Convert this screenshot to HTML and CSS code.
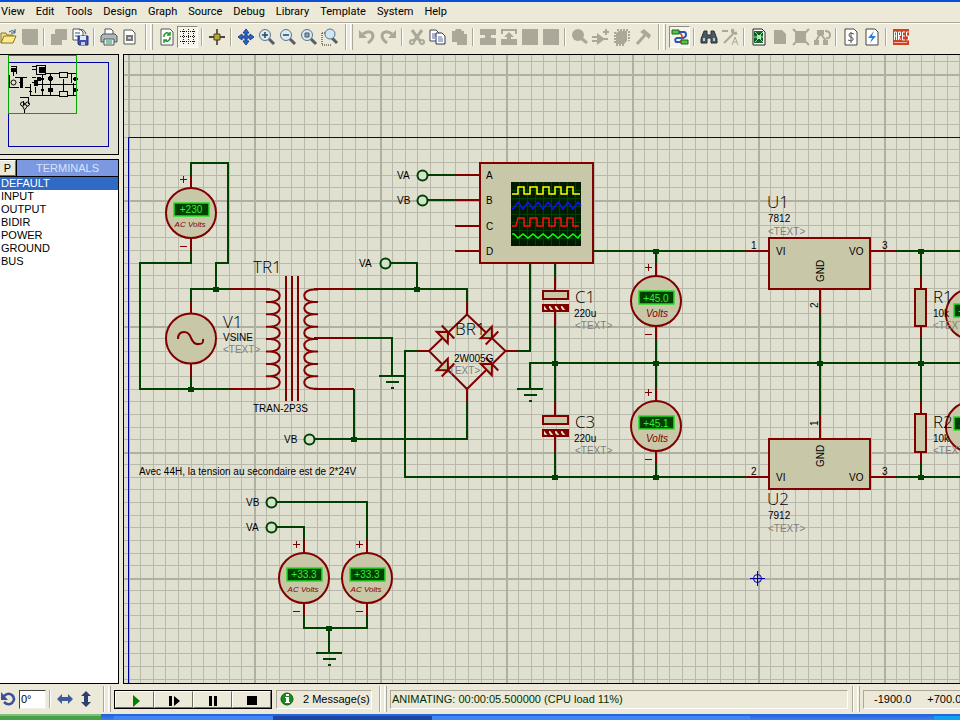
FILE: index.html
```html
<!DOCTYPE html>
<html lang="en">
<head>
<meta charset="utf-8">
<title>Schematic capture</title>
<link rel="stylesheet" href="styles.css">
</head>
<body>
<div class="title-edge"></div>
<nav class="menu" aria-label="Main menu">
  <button>View</button><button>Edit</button><button>Tools</button><button>Design</button><button>Graph</button><button>Source</button><button>Debug</button><button>Library</button><button>Template</button><button>System</button><button>Help</button>
</nav>

<div class="toolbar" role="toolbar" aria-label="Tools">
  <button aria-label="Open"><svg viewBox="0 0 18 18"><path d="M1 15V5h5l1 2h6v2" fill="#f5df85" stroke="#8a7420"/><path d="M1 15l3-7h12l-3 7z" fill="#ffe98c" stroke="#8a7420"/><path d="M9 4q3-3 6 0m0-3v4h-4" fill="none" stroke="#2c5a7c"/></svg></button>
  <button aria-label="Save" disabled><svg viewBox="0 0 18 18"><path class="off" d="M1 1h16v16H3l-2-2z"/></svg></button>
  <i class="sep"></i>
  <button aria-label="Import section" disabled><svg viewBox="0 0 18 18"><path class="off" d="M1 6h4V2l1-1h11v11h-5v5H1z"/></svg></button>
  <button aria-label="Export section"><svg viewBox="0 0 18 18"><path d="M2 1h7l3 3v8H2z" fill="#fff" stroke="#555"/><path d="M4 5h5M4 8h4M8 2q5-2 7 4" stroke="#24518c" fill="none"/><path d="M7 8h10v9H8l-1-1z" fill="#3f51b0" stroke="#29327a"/><path d="M9 8h6v4H9z" fill="#dfe6ff"/><path d="M10 14h4v3h-4z" fill="#ccd"/></svg></button>
  <i class="sep"></i>
  <button aria-label="Print"><svg viewBox="0 0 18 18"><path d="M5 7V1h6l2 2v4" fill="#fff" stroke="#555"/><path d="M1 8l2-2h12l2 2v6H1z" fill="#aeb9bd" stroke="#4c575c"/><path d="M4 11h10v6H4z" fill="#e8eff0" stroke="#4c575c"/><path d="M6 13h6M6 15h6" stroke="#2f9a56"/></svg></button>
  <button aria-label="Print area"><svg viewBox="0 0 18 18"><path d="M3 2h8l3 3v11H3z" fill="#fff" stroke="#555"/><path d="M5 7h7v6H5z" fill="#777"/><path d="M7 9h3v2H7z" fill="#c8d0d8"/></svg></button>
  <i class="grip"></i>
  <button aria-label="Redraw"><svg viewBox="0 0 18 18"><path d="M3 1h9l3 3v13H3z" fill="#fff" stroke="#555"/><path d="M6 9V7q3-4 5-1m1-2v3H9M12 9v2q-3 4-5 1m-1 3v-3h3" fill="none" stroke="#1d9a2b" stroke-width="1.5"/></svg></button>
  <button aria-label="Grid" class="pressed"><svg viewBox="0 0 18 18"><path d="M1 3.500h16M1 8.500h16M1 13.500h16" stroke="#111" stroke-dasharray="1 1"/><path d="M4.500 1v16M9.500 1v16M14.500 1v16" stroke="#222" stroke-dasharray="1 1"/></svg></button>
  <i class="sep"></i>
  <button aria-label="Origin"><svg viewBox="0 0 18 18"><path d="M9 1v16M1 9h16" stroke="#111" stroke-width="1.3"/><path d="M6 6h6v6H6z" fill="#b5a838" stroke="#4d4510"/></svg></button>
  <i class="sep"></i>
  <button aria-label="Pan"><svg viewBox="0 0 18 18"><path d="M9 1l3 4h-2v3h3V6l4 3-4 3v-2h-3v3h2l-3 4-3-4h2v-3H5v2L1 9l4-3v2h3V5H6z" fill="#2c64c8" stroke="#15428f"/></svg></button>
  <button aria-label="Zoom in"><svg viewBox="0 0 18 18"><path d="M10 10l6 6" stroke="#555f66" stroke-width="3"/><circle cx="7" cy="7" r="5.500" fill="#dceaf2" stroke="#5a7488"/><path d="M4 7h6M7 4v6" stroke="#27465c" stroke-width="1.5"/></svg></button>
  <button aria-label="Zoom out"><svg viewBox="0 0 18 18"><path d="M10 10l6 6" stroke="#555f66" stroke-width="3"/><circle cx="7" cy="7" r="5.500" fill="#dceaf2" stroke="#5a7488"/><path d="M4 7h6" stroke="#27465c" stroke-width="1.5"/></svg></button>
  <button aria-label="Zoom all"><svg viewBox="0 0 18 18"><path d="M10 10l6 6" stroke="#555f66" stroke-width="3"/><circle cx="7" cy="7" r="5.500" fill="#dceaf2" stroke="#5a7488"/><path d="M5 5h4v4H5z" fill="#8ba3b3" stroke="#405c70"/></svg></button>
  <button aria-label="Zoom area"><svg viewBox="0 0 18 18"><path d="M1 5v12h9M1 5h4" fill="none" stroke="#222" stroke-dasharray="1 1"/><path d="M11 10l5 5" stroke="#555f66" stroke-width="3"/><circle cx="9" cy="6" r="5" fill="#cfe6f7" stroke="#5a7488"/></svg></button>
  <i class="grip"></i>
  <button aria-label="Undo" disabled><svg viewBox="0 0 18 18"><path d="M5 6q5-4 9-1 3 5-4 10" class="offline" stroke-width="3"/><path class="off" d="M1 2v8h8z"/></svg></button>
  <button aria-label="Redo" disabled><svg viewBox="0 0 18 18"><path d="M13 6Q8 2 4 5q-3 5 4 10" class="offline" stroke-width="3"/><path class="off" d="M17 2v8H9z"/></svg></button>
  <i class="sep"></i>
  <button aria-label="Cut" disabled><svg viewBox="0 0 18 18"><path d="M4 2l8 11M14 2L6 13" class="offline" stroke-width="3"/><circle class="offline" cx="4" cy="14" r="2" stroke-width="2"/><circle class="offline" cx="14" cy="14" r="2" stroke-width="2"/></svg></button>
  <button aria-label="Copy"><svg viewBox="0 0 18 18"><path d="M1 2h6l3 3v8H1z" fill="#fff" stroke="#445"/><path d="M3 6h4M3 8h4M3 10h3" stroke="#4a6ea9"/><path d="M7 5h6l3 3v8H7z" fill="#fff" stroke="#335"/><path d="M9 9h4M9 11h5M9 13h5" stroke="#4a6ea9"/></svg></button>
  <button aria-label="Paste" disabled><svg viewBox="0 0 18 18"><path class="off" d="M2 3h3l1-2h5l1 2h2v3h3v11H7v-3H2z"/></svg></button>
  <i class="sep"></i>
  <button aria-label="Block copy" disabled><svg viewBox="0 0 18 18"><path class="off" d="M1 1h16v6h-5v3h5v7H1v-7h5V7H1z"/></svg></button>
  <button aria-label="Block move" disabled><svg viewBox="0 0 18 18"><path d="M2 6V2h14v4" class="offline" stroke-width="2"/><path class="off" d="M9 4l5 5h-3v2h6v6H1v-6h6V9H4z"/></svg></button>
  <button aria-label="Block rotate" disabled><svg viewBox="0 0 18 18"><path class="off" d="M1 1h16v16H1z"/></svg></button>
  <button aria-label="Block delete" disabled><svg viewBox="0 0 18 18"><path class="off" d="M1 1h16v16H1z"/></svg></button>
  <i class="sep"></i>
  <button aria-label="Pick parts" disabled><svg viewBox="0 0 18 18"><circle class="off" cx="7" cy="7" r="6"/><path class="offline" stroke-width="3" d="M10 10l6 5"/></svg></button>
  <button aria-label="Make device" disabled><svg viewBox="0 0 18 18"><path class="off" d="M5 5l8 6-8 6z"/><path class="offline" stroke-width="2" d="M0 9h5M0 13h5M12 11h4M11 4h6M14 1v6"/></svg></button>
  <button aria-label="Packaging tool" disabled><svg viewBox="0 0 18 18"><path class="off" d="M3 5l3-2h8v10l-3 3H3z"/><path class="offline" stroke-dasharray="2 1" stroke-width="2" d="M4 2h12M2 4v12M16 3v10M3 17h9"/></svg></button>
  <button aria-label="Decompose" disabled><svg viewBox="0 0 18 18"><path class="offline" stroke-width="3" d="M3 16l8-9"/><path class="off" d="M6 4l4-3 7 6-2 4-3-3z"/></svg></button>
  <i class="grip"></i>
  <button aria-label="Wire autorouter" class="pressed"><svg viewBox="0 0 18 18"><path d="M8 4h5q2 0 2 3 0 2-3 3H6q-3 1-1 4h5" fill="none" stroke="#2455b8" stroke-width="2"/><path d="M7 5q4 0 4 4t-2 5h3" fill="none" stroke="#d23a22" stroke-width="1.500"/><path d="M1 2h7v4H1zM10 12h7v4h-7z" fill="#53c544" stroke="#17651a"/></svg></button>
  <i class="sep"></i>
  <button aria-label="Search and tag"><svg viewBox="0 0 18 18"><path d="M4 3h3v4h4V3h3l3 8v4h-6v-5H7v5H1v-4z" fill="#4b5960" stroke="#26333a"/><path d="M3 10h2v3H3zM13 10h2v3h-2z" fill="#b9cad3"/></svg></button>
  <button aria-label="Property assignment" disabled><svg viewBox="0 0 18 18"><path class="offline" stroke-width="2" d="M3 15l9-9M1 3h6"/><path class="offline" stroke-width="3" d="M12 1q-2 5 4 4"/><path class="offline" d="M11 17l3-8 3 8M12 14h4"/></svg></button>
  <i class="sep"></i>
  <button aria-label="Design explorer"><svg viewBox="0 0 18 18"><path d="M3 1h9l3 3v13H3z" fill="#fff" stroke="#222"/><path d="M4 3h9v12H4z" fill="#1b6a2f"/><path d="M4 6h9M4 12h9" stroke="#0c3b18"/><path d="M5 4l3 3M13 4l-3 3M5 14l3-3M13 14l-3-3M4 9h9" stroke="#8fe09a"/><path d="M7 7h4v4H7z" fill="#a6f0ae"/></svg></button>
  <button aria-label="New sheet" disabled><svg viewBox="0 0 18 18"><path class="off" d="M3 2h8l4 4v10H3z"/></svg></button>
  <button aria-label="Remove sheet" disabled><svg viewBox="0 0 18 18"><path class="off" d="M3 3h11v12H3z"/><path class="offline" stroke-width="2" d="M1 1l16 16M17 1L1 17"/></svg></button>
  <button aria-label="Exit to parent" disabled><svg viewBox="0 0 18 18"><path class="off" d="M4 2h7v5H4zM1 12h5v5H1zM10 12h5v5h-5z"/><path class="offline" stroke-width="2" d="M7 6l-4 7M8 6l5 7M12 3q5 0 5 4t-4 3"/></svg></button>
  <i class="sep"></i>
  <button aria-label="Bill of materials"><svg viewBox="0 0 18 18"><path d="M3 1h9l3 3v13H3z" fill="#fff" stroke="#444"/><path d="M12 6q-5-2-5 1 0 2 2 2 3 1 2 3-1 2-5 0M9 4v11" fill="none" stroke="#555"/></svg></button>
  <button aria-label="Electrical rule check"><svg viewBox="0 0 18 18"><path d="M3 1h9l3 3v13H3z" fill="#fff" stroke="#444"/><path d="M11 3L5 10h4l-2 5 6-7H9z" fill="#2b7be0"/></svg></button>
  <i class="sep"></i>
  <button aria-label="Netlist to ARES"><svg viewBox="0 0 18 18"><path d="M1 1h16v16H1z" fill="#d1401f"/><path d="M2.500 12V4h2v8M3 8h2M6.500 12V4h2v3.500h-2l2 4.500M13 4h-2.500v8H13M11 8h2M16.500 4h-2v4h2v4h-2" fill="none" stroke="#fff"/><path d="M2 14.500h13" stroke="#f2b7a4"/></svg></button>
</div>

<main class="work">
  <aside class="side">
    <div class="overview">
      <svg class="fill" aria-label="Overview">
        <g transform="translate(0,-55)" fill="none" shape-rendering="crispEdges">
          <rect x="8.500" y="62.500" width="100" height="84" stroke="#0000a0"/>
          <g stroke="#000">
            <path d="M13.500 68v8M16.500 66v8M11 66.500h5M9.500 75v12h9M15 77.500h12M19 82.500h2M21.500 78v10M25 87.500h6M32 77.500h4M32 82.500h4M35.500 87v6M29 91.500h3M32 66.500h4M32 69.500h4M42.500 74v22M50.500 73v22M46 73.500h13M68 73.500h9M36 84.500h41M30.500 84v11h29M68 95.500h9M63.500 79v12M71.500 74v9M73.500 83v12M20 97.500h8v6M23 100.500v4M24.500 110v4M22 113.500h5"/>
            <rect x="36.500" y="65.500" width="9" height="9"/><rect x="59.500" y="72.500" width="8" height="5"/><rect x="59.500" y="91.500" width="8" height="5"/>
            <path d="M21.500 77v11" stroke-width="3"/><path d="M35.500 80v6M39 77v4" stroke-width="4"/>
          </g>
          <g fill="#000"><rect x="39" y="67" width="6" height="6"/><circle cx="13.500" cy="70" r="2.500"/><circle cx="50.500" cy="78.500" r="2.500"/><circle cx="50.500" cy="90" r="2.500"/><circle cx="42.500" cy="79" r="1.800"/><circle cx="42.500" cy="90" r="1.800"/><circle cx="75.500" cy="79" r="2.300"/><circle cx="75.500" cy="90" r="2.300"/></g>
          <g stroke="#000" shape-rendering="auto"><circle cx="13.500" cy="82.500" r="2.500"/><circle cx="22.500" cy="104" r="2"/><circle cx="27.500" cy="104" r="2"/><path d="M22.500 106l2 4 3-4"/></g>
          <rect x="8.500" y="55.500" width="68" height="58" stroke="#00a800"/>
        </g>
      </svg>
    </div>
    <section class="picker">
      <header><button class="pick">P</button><h2>TERMINALS</h2></header>
      <ul>
        <li><button class="current">DEFAULT</button></li><li><button>INPUT</button></li><li><button>OUTPUT</button></li><li><button>BIDIR</button></li><li><button>POWER</button></li><li><button>GROUND</button></li><li><button>BUS</button></li>
      </ul>
    </section>
  </aside>

  <div class="sheet">
    <svg class="fill" aria-label="Schematic">
      <defs>
        <pattern id="grid" x="128" y="74" width="126" height="126" patternUnits="userSpaceOnUse">
          <path class="minor" d="M12.500 0v126M25.500 0v126M37.500 0v126M50.500 0v126M63.500 0v126M75.500 0v126M88.500 0v126M101.500 0v126M113.500 0v126M0 12.500h126M0 25.500h126M0 37.500h126M0 50.500h126M0 63.500h126M0 75.500h126M0 88.500h126M0 101.500h126M0 113.500h126"/>
          <path class="major" d="M0 1h126M1 0v126"/>
        </pattern>
        <pattern id="hatch" width="6" height="8" patternUnits="userSpaceOnUse"><path d="M0 0h6v8H0z" fill="#800000"/><path d="M0 0l6 8" stroke="#e8dcc0" stroke-width="2"/></pattern>
        <g id="meter">
          <path class="pin" d="M0-38v13M0 25v13"/>
          <path class="thin" d="M-7.500-37v7M-11-33.500h7M-11 33.500h7"/>
          <circle class="body" r="25"/>
          <rect x="-17" y="-10" width="35" height="13" fill="#004000" stroke="#20e020" stroke-width="1.500"/>
        </g>
        <g id="diode"><path class="body" d="M0 0l-8-8v16z" stroke-width="1.500"/><path class="pin" d="M0-9v18"/></g>
        <g id="ground"><path class="wire" d="M-13 0h26M-6 6h13M-1 12h3"/></g>
        <g id="cap"><rect class="body" x="-12" y="1" width="25" height="8"/><rect x="-12" y="15" width="25" height="6" fill="url(#hatch)" class="edge"/></g>
      </defs>
      <g transform="translate(-124,-55)">
        <rect x="100" y="50" width="3000" height="2000" fill="url(#grid)"/>
        <path class="border" d="M128.500 2000V137.500H3000"/>

        <g class="wire">
          <path d="M191 176V163H228V263H216V289M191 251V263H140V389H229M191 301V289H229M191 376V389"/>
          <path d="M354 289H467V302M354 338H392V376M354 389V439M315 439H467V401M391 263H417V289"/>
          <path d="M428 175H455M428 200H455M593 251H745M530 263V351H517M417 351H405V477H745M555 263V277M555 326V402M555 451V477"/>
          <path d="M530 388V363H3000M656 251V264M656 339V389M656 464V477M820 314V416M895 251H3000M895 477H3000M921 251V277M921 338V402M921 464V477"/>
          <path d="M277 502H367V541M277 527H304V541M304 616V628H367V616M329 628V653"/>
        </g>
        <g class="pin">
          <path d="M191 301V314M191 363V377M229 289H270M229 389H270M314 289H354M314 338H354M314 389H354"/>
          <path d="M286 276V401M292 276V401M298 276V401"/>
          <path d="M455 175H480M455 200H480M455 226H480M455 251H480M467 301V315M467 388V401M417 351H429M505 351H517"/>
          <path d="M555 277V290M555 312V326M555 402V415M555 437V451M745 251H769M870 251H895M745 477H769M870 477H895M820 289V314M820 415V438"/>
          <path d="M921 276V289M921 326V338M921 401V414M921 452V464"/>
        </g>
        <g class="coil">
          <path d="M266 289.500h4c13 0 13 12.400 0 12.400h-4h4c13 0 13 12.400 0 12.400h-4h4c13 0 13 12.400 0 12.400h-4h4c13 0 13 12.400 0 12.400h-4h4c13 0 13 12.400 0 12.400h-4h4c13 0 13 12.400 0 12.400h-4h4c13 0 13 12.400 0 12.400h-4h4c13 0 13 12.400 0 12.400h-4"/>
          <path d="M318 289.500h-4c-13 0-13 12.400 0 12.400h4h-4c-13 0-13 12.400 0 12.400h4h-4c-13 0-13 12.400 0 12.400h4h-4c-13 0-13 12.400 0 12.400h4h-4c-13 0-13 12.400 0 12.400h4h-4c-13 0-13 12.400 0 12.400h4h-4c-13 0-13 12.400 0 12.400h4h-4c-13 0-13 12.400 0 12.400h4"/>
          <path d="M467 314.500L505.500 351 467 389 429 351z"/>
        </g>

        <g class="dot"><path d="M213 287h6v5h-6zM188 387h6v5h-6zM414 287h6v5h-6zM351 437h6v5h-6zM326 626h6v5h-6zM552 361h6v5h-6zM552 475h6v5h-6zM653 249h6v5h-6zM653 361h6v5h-6zM653 475h6v5h-6zM817 361h6v5h-6zM918 249h6v5h-6zM918 361h6v5h-6zM918 475h6v5h-6z"/></g>
        <g class="term"><circle cx="422.500" cy="175.500" r="5"/><circle cx="422.500" cy="200.500" r="5"/><circle cx="385.500" cy="263.500" r="5"/><circle cx="309.500" cy="439.500" r="5"/><circle cx="271.500" cy="502.500" r="5"/><circle cx="271.500" cy="527.500" r="5"/></g>
        <use href="#ground" x="392" y="376"/><use href="#ground" x="530" y="389"/><use href="#ground" x="329" y="653"/>

        <circle class="body" cx="191" cy="338.500" r="25"/>
        <path class="coil" d="M178 339q0-7 6-7 5 0 7 6 3 7 8 6 5 0 4-5"/>

        <g class="box"><rect x="480" y="163" width="113" height="100"/><rect x="769" y="238" width="101" height="51"/><rect x="769" y="439" width="101" height="50"/><rect x="915" y="289" width="11" height="37"/><rect x="915" y="414" width="11" height="38"/></g>
        <use href="#cap" x="555" y="290"/><use href="#cap" x="555" y="415"/>
        <use href="#meter" x="191" y="213"/><use href="#meter" x="656" y="301"/><use href="#meter" x="656" y="426"/><use href="#meter" x="304" y="578"/><use href="#meter" x="367" y="578"/><use href="#meter" x="971" y="314"/><use href="#meter" x="971" y="427"/>

        <rect x="511" y="182" width="70" height="64" fill="#001c00"/>
        <path d="M511 190.500h70M511 198.500h70M511 206.500h70M511 214.500h70M511 222.500h70M511 230.500h70M511 238.500h70M519.500 182v64M527.500 182v64M535.500 182v64M543.500 182v64M551.500 182v64M559.500 182v64M567.500 182v64M575.500 182v64" stroke="#004000" fill="none"/>
        <g fill="none" stroke-width="1.500">
          <path stroke="#ffff00" d="M512 194h6v-7h6v7h6v-7h7v7h6v-7h6v7h6v-7h6v7h6v-7h6v7h7"/>
          <path stroke="#1010ff" d="M512 209l2-1 4-6 5 7 5-7 5 7 5-7 5 7 5-7 5 7 5-7 5 7 5-7 5 7 5-7 3 4"/>
          <path stroke="#ff1010" d="M512 226h4l2-8h6v8h6v-8h7v8h6v-8h6v8h6v-8h6v8h6v-8h6v8h6"/>
          <path stroke="#10ff10" d="M512 234l2 0 4 4 5-4 5 4 5-4 5 4 5-4 5 4 5-4 5 4 5-4 5 4 5-4 5 4 3-4"/>
        </g>

        <g class="note">
          <text x="223" y="353">&lt;TEXT&gt;</text><text x="443" y="374">&lt;TEXT&gt;</text><text x="575" y="329">&lt;TEXT&gt;</text><text x="575" y="454">&lt;TEXT&gt;</text><text x="768" y="235">&lt;TEXT&gt;</text><text x="768" y="532">&lt;TEXT&gt;</text><text x="933" y="329">&lt;TEXT&gt;</text><text x="933" y="454">&lt;TEXT&gt;</text>
        </g>
        <use href="#diode" transform="translate(448,332) rotate(-44)"/><use href="#diode" transform="translate(492,338) rotate(44)"/><use href="#diode" transform="translate(448,370) rotate(44)"/><use href="#diode" transform="translate(492,364) rotate(-44)"/>
        <g class="label">
          <text x="486" y="179">A</text><text x="486" y="204">B</text><text x="486" y="230">C</text><text x="486" y="255">D</text>
          <text x="397" y="179">VA</text><text x="397" y="204">VB</text><text x="359" y="267">VA</text><text x="284" y="443">VB</text><text x="246" y="506">VB</text><text x="246" y="531">VA</text>
          <text x="223" y="341">VSINE</text><text x="253" y="412">TRAN-2P3S</text><text x="454" y="362">2W005G</text>
          <text x="574" y="317">220u</text><text x="574" y="442">220u</text><text x="768" y="222">7812</text><text x="768" y="519">7912</text><text x="933" y="317">10k</text><text x="933" y="442">10k</text>
          <text x="776" y="255">VI</text><text x="849" y="255">VO</text><text x="776" y="481">VI</text><text x="849" y="481">VO</text>
          <text x="751" y="249">1</text><text x="882" y="249">3</text><text x="751" y="475">2</text><text x="882" y="475">3</text>
          <text transform="translate(824,282) rotate(-90)">GND</text><text transform="translate(824,467) rotate(-90)">GND</text><text transform="translate(818,308) rotate(-90)">2</text><text transform="translate(818,426) rotate(-90)">1</text>
          <text x="139" y="475">Avec 44H, la tension au secondaire est de 2*24V</text>
        </g>
        <g class="ref">
          <text x="253" y="273">TR1</text><text x="223" y="328">V1</text><text x="455" y="335">BR1</text><text x="575" y="303">C1</text><text x="575" y="428">C3</text><text x="767" y="208">U1</text><text x="767" y="505">U2</text><text x="933" y="303">R1</text><text x="933" y="428">R2</text>
        </g>

        <g class="reading">
          <text x="191" y="213">+230</text><text x="656" y="302">+45.0</text><text x="656" y="427">+45.1</text><text x="304" y="578">+33.3</text><text x="367" y="578">+33.3</text><text x="971" y="315">+12.0</text><text x="971" y="428">-12.0</text>
        </g>
        <g class="unit"><text x="190" y="227">AC Volts</text><text x="303" y="592">AC Volts</text><text x="366" y="592">AC Volts</text><text class="dc" x="657" y="317">Volts</text><text class="dc" x="657" y="442">Volts</text></g>

        <g fill="none" stroke="#0000a0"><circle cx="757.500" cy="578.500" r="4"/><path d="M750 578.500h15M757.500 571v15"/></g>
      </g>
    </svg>
  </div>
</main>

<footer class="status">
  <div class="orient">
    <button aria-label="Rotate"><svg viewBox="0 0 18 18"><path d="M4 6q4-4 8-1 4 4 0 8-4 3-8-1" fill="none" stroke="#3c4f96" stroke-width="2.500"/><path d="M1 2v8h7z" fill="#3c4f96"/></svg></button>
    <input type="text" value="0°" aria-label="Rotation angle">
    <i class="sep"></i>
    <button aria-label="Mirror horizontally"><svg viewBox="0 0 18 18"><path d="M1 9l5-5v3h6V4l5 5-5 5v-3H6v3z" fill="#3c5a9c"/></svg></button>
    <button aria-label="Mirror vertically"><svg viewBox="0 0 18 18"><path d="M9 1l5 5h-3v6h3l-5 5-5-5h3V6H4z" fill="#2f3f70"/></svg></button>
  </div>
  <i class="grip"></i>
  <div class="transport">
    <button aria-label="Play"><svg viewBox="0 0 18 18"><path d="M7 3v12l7-6z" fill="#008000"/></svg></button>
    <button aria-label="Step"><svg viewBox="0 0 18 18"><path d="M4 4h3v10H4zM9 4v10l6-5z"/></svg></button>
    <button aria-label="Pause"><svg viewBox="0 0 18 18"><path d="M5 4h3v10H5zM10 4h3v10h-3z"/></svg></button>
    <button aria-label="Stop"><svg viewBox="0 0 18 18"><path d="M4 4h10v9H4z"/></svg></button>
  </div>
  <div class="field messages"><svg viewBox="0 0 14 14"><circle cx="7" cy="7" r="6" fill="#1c8a1c" stroke="#0d5d0d"/><path d="M6 2h3v2H6zM5 5h4v5h1v1H5v-1h1V6H5z" fill="#fff"/></svg><span>2 Message(s)</span></div>
  <i class="grip"></i>
  <div class="field progress">ANIMATING: 00:00:05.500000 (CPU load 11%)</div>
  <i class="grip"></i>
  <div class="field coords"><span>-1900.0</span><span>+700.0</span></div>
</footer>
<div class="taskbar"><i class="start"></i><i class="task"></i><i class="task active"></i><i class="task"></i><i class="task"></i><i class="room"></i><i class="tray"></i></div>
</body>
</html>
```
FILE: styles.css
```css
* { box-sizing: border-box; }
body {
  margin: 0;
  height: 100vh;
  display: flex;
  flex-direction: column;
  overflow: hidden;
  background: #ece9d8;
  color: #000;
  font: 11px/13px "Liberation Sans", Arial, sans-serif;
}
button { font: inherit; color: inherit; background: none; border: 0; padding: 0; white-space: nowrap; }
svg { display: block; }
.fill { width: 100%; height: 100%; }

.title-edge { flex: none; height: 2px; background: #0a4fd8; }
.menu {
  flex: none;
  display: flex;
  align-items: center;
  gap: 11px;
  height: 21px;
  padding: 0 1px 2px;
  border-bottom: 1px solid #aca899;
  font: 11px/13px Roboto, "Liberation Sans", sans-serif;
}
.toolbar {
  flex: none;
  display: flex;
  align-items: center;
  height: 31px;
  margin-left: -2px;
  padding-bottom: 4px;
  border-top: 1px solid #fff;
  overflow: hidden;
}
.toolbar button { flex: none; display: grid; place-items: center; width: 21px; height: 22px; }
.toolbar svg { width: 18px; height: 18px; }
.toolbar .pressed { background: #f6f4ec; border: 1px solid; border-color: #8c8a7e #fff #fff #8c8a7e; }
.off { fill: #aca899; }
.offline { fill: none; stroke: #aca899; }
.sep { flex: none; width: 8px; height: 18px; background: linear-gradient(90deg, #aca899 1px, #fff 1px, #fff 2px, transparent 2px) 3px 0 no-repeat; }
.grip {
  flex: none;
  width: 16px;
  height: 26px;
  background:
    linear-gradient(90deg, #aca899 1px, #fff 1px, #fff 2px, transparent 2px) 5px 0 no-repeat,
    linear-gradient(90deg, #fff 1px, #f4f2e8 1px, #f4f2e8 2px, #aca899 2px, #aca899 3px, transparent 3px) 10px 0 no-repeat;
}

.work { flex: 1; min-height: 0; display: flex; gap: 4px; }
.side { flex: none; width: 119px; display: flex; flex-direction: column; gap: 4px; }
.overview { height: 101px; border: 1px solid #000; border-left: 0; background: #e0e0d1; }
.picker { flex: 1; border: 1px solid #000; border-left: 0; background: #fff; }
.picker header { display: flex; height: 17px; border-bottom: 1px solid #000; }
.pick { width: 16px; background: #ece9d8; border: 1px solid; border-color: #fff #716f64 #716f64 #fff; border-left: 0; text-align: center; }
.picker h2 { flex: 1; margin: 0; border-left: 1px solid #000; font: 11px/16px "Liberation Sans", Arial, sans-serif; text-align: center; color: #d8e4fc; background: #7b98e0; }
.picker ul { list-style: none; margin: 0; padding: 0; }
.picker li button { display: block; width: 100%; height: 13px; padding-left: 1px; text-align: left; }
.picker .current { background: #316ac5; color: #fff; }
.sheet { flex: 1; min-width: 0; border: 1px solid #000; border-right: 0; background: #e0e0d1; }

.minor { stroke: #b9b9ab; fill: none; }
.major { stroke: #b0b0a2; stroke-width: 2; fill: none; }
.border { stroke: #0000a0; fill: none; }
.wire { stroke: #004000; stroke-width: 2; fill: none; shape-rendering: crispEdges; }
.pin { stroke: #800000; stroke-width: 2; fill: none; }
g.pin { shape-rendering: crispEdges; }
.thin { stroke: #800000; fill: none; }
.coil { stroke: #800000; stroke-width: 2; fill: none; }
.edge { stroke: #800000; stroke-width: 2; }
.body, .box { stroke: #800000; stroke-width: 2; fill: #c8c8a8; }
.box { shape-rendering: crispEdges; }
.dot { fill: #004000; }
.term { fill: #d4e4cc; stroke: #004000; stroke-width: 2; }
.label, .note { font: 10px "Liberation Sans", Arial, sans-serif; }
.note { fill: #808078; }
.ref { font: 300 17px "Open Sans", "Liberation Sans", sans-serif; }
.reading { font: 10px "Liberation Sans", Arial, sans-serif; fill: #30f030; text-anchor: middle; }
.unit { font: italic 8px "Liberation Sans", Arial, sans-serif; fill: #800000; text-anchor: middle; }
.unit .dc { font-size: 10px; }

.status { flex: none; display: flex; align-items: center; height: 30px; }
.status .orient { display: flex; align-items: center; width: 102px; margin-left: -2px; }
.status button { display: grid; place-items: center; width: 21px; height: 20px; }
.orient svg, .transport svg { width: 18px; height: 18px; }
.orient input { width: 27px; height: 19px; padding: 0 1px; font: inherit; background: #fff; border: 1px solid; border-color: #404040 #f1efe2 #f1efe2 #404040; }
.status .grip { margin-left: -2px; }
.transport { display: flex; border: 1px solid #000; }
.status .transport button { width: 39px; height: 17px; border: 1px solid; border-color: #fff #716f64 #716f64 #fff; }
.field { display: flex; align-items: center; height: 19px; border: 1px solid; border-color: #aca899 #fff #fff #aca899; white-space: nowrap; }
.messages { width: 96px; margin-left: 4px; padding-left: 3px; gap: 9px; }
.messages svg { width: 14px; height: 14px; }
.status .messages + .grip { margin-left: 2px; }
.progress { flex: 1; padding-left: 1px; color: #003000; }
.status .progress + .grip { margin-left: -1px; }
.coords { width: 97px; padding-left: 10px; gap: 16px; border-right: 0; overflow: hidden; }

.taskbar { flex: none; display: flex; height: 6px; background: linear-gradient(#2460d4, #3c80f0); }
.taskbar i { border-top: 2px solid #2a66d8; }
.start { width: 101px; background: #48a048; margin-right: 13px; }
.taskbar .start { border-color: #7cc07c; }
.task { width: 159px; background: #4186f4; }
.task.active { background: #1a48a8; }
.room { flex: 1; }
.tray { width: 26px; background: #10a0f0; }
```
